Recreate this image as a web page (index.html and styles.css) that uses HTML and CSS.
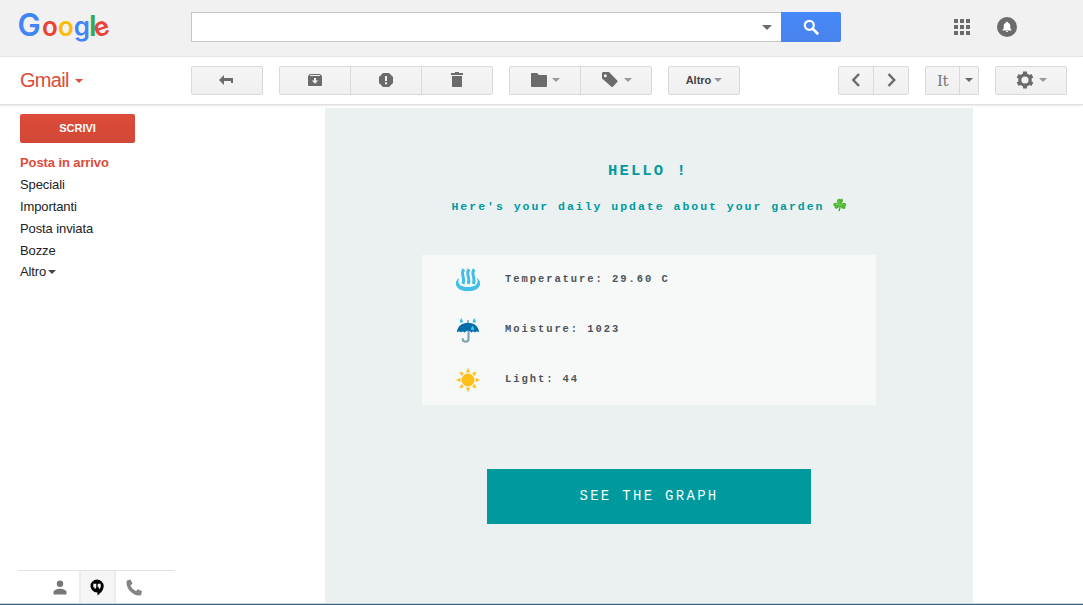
FILE: index.html
```html
<!DOCTYPE html>
<html lang="it">
<head>
<meta charset="utf-8">
<title>Gmail</title>
<link rel="stylesheet" href="styles.css">
</head>
<body>
<div class="app">
  <header class="header">
    <svg class="logo" width="94" height="36" viewBox="0 0 94 36" aria-label="Google">
      <text y="27.600"><tspan class="logo-cap blue" x="-1.600">G</tspan><tspan class="red" x="23">o</tspan><tspan class="yellow" x="39">o</tspan><tspan class="blue" x="54.800">g</tspan><tspan class="logo-l green" x="70">l</tspan></text>
      <text class="red" transform="translate(77.600 29.800) rotate(-18)">e</text>
    </svg>
    <div class="search">
      <div class="search-field"><i class="caret caret-lg"></i></div>
      <div class="search-button">
        <svg width="18" height="18" viewBox="0 0 18 18"><circle cx="7.300" cy="7.300" r="4.500" fill="none" stroke="#fff" stroke-width="2.200"/><path d="M10.500 10.500l5.700 5.700" stroke="#fff" stroke-width="2.700"/></svg>
      </div>
    </div>
    <svg class="apps" width="16" height="16" viewBox="0 0 16 16" fill="#6b6b6b"><path d="M0 0h4v4H0zM6 0h4v4H6zM12 0h4v4h-4zM0 6h4v4H0zM6 6h4v4H6zM12 6h4v4h-4zM0 12h4v4H0zM6 12h4v4H6zM12 12h4v4h-4z"/></svg>
    <svg class="bell" width="20" height="20" viewBox="0 0 20 20"><circle cx="10" cy="10" r="10" fill="#6b6b6b"/><path d="M10 4.800c.7 0 1.100.4 1.100 1 1.500.4 2.200 1.600 2.200 3v2.700l1.200 1.200v.7h-9v-.7l1.200-1.200V8.800c0-1.400.7-2.600 2.200-3 0-.6.4-1 1.100-1zM8.900 14h2.200a1.100 1.100 0 0 1-2.200 0z" fill="#fff"/></svg>
  </header>

  <div class="toolbar">
    <div class="brand">Gmail<i class="caret caret-red"></i></div>
    <div class="group"><div class="btn w72">
      <svg class="nudge-left" width="16" height="14" viewBox="0 0 16 14"><path d="M1 7L6 2v3h9v5h-2V8H6v4z" fill="#6b6b6b"/></svg>
    </div></div>
    <div class="group">
      <div class="btn w72"><svg width="16" height="16" viewBox="0 0 16 16"><path fill="#6b6b6b" fill-rule="evenodd" d="M3 2h10l2 2v9a1 1 0 0 1-1 1H2a1 1 0 0 1-1-1V4zM3 3.100v.8h10v-.8zM7 6v2.500H4.800L8 11.800l3.200-3.300H9V6z"/></svg></div>
      <div class="btn w71"><svg width="16" height="16" viewBox="0 0 16 16"><path fill="#6b6b6b" d="M5 1h6l4 4v6l-4 4H5l-4-4V5z"/><path fill="#f3f3f3" d="M7 4h2v5H7zM7 10.300h2v2H7z"/></svg></div>
      <div class="btn w71"><svg width="16" height="16" viewBox="0 0 16 16"><path fill="#6b6b6b" d="M6 0h4v1h4v2H2V1h4zM3 4h10v10.500L12.500 15h-9L3 14.500z"/></svg></div>
    </div>
    <div class="group">
      <div class="btn w72"><svg width="18" height="16" viewBox="0 0 18 16"><path fill="#6b6b6b" d="M1 1.500L1.500 1H7L9 3h7.500l.5.500V14.500l-.5.500h-15l-.5-.5z"/></svg><i class="caret caret-gray"></i></div>
      <div class="btn w71"><svg width="18" height="16" viewBox="0 0 18 16"><path fill="#6b6b6b" fill-rule="evenodd" d="M1 1L2 0h6l8.500 8.700v1l-4.800 5.300h-1L1 6.500zM4.300 2.300a1.500 1.500 0 1 0 0 3 1.500 1.500 0 0 0 0-3z"/></svg><i class="caret caret-gray caret-tag"></i></div>
    </div>
    <div class="group"><div class="btn w72 altro">Altro<i class="caret caret-gray"></i></div></div>
    <div class="toolbar-end">
      <div class="group">
        <div class="btn w36"><svg width="14" height="16" viewBox="0 0 14 16"><path d="M10 2L4.300 8 10 14" fill="none" stroke="#6b6b6b" stroke-width="2.500"/></svg></div>
        <div class="btn w35"><svg width="14" height="16" viewBox="0 0 14 16"><path d="M4.500 2l5.700 6-5.700 6" fill="none" stroke="#6b6b6b" stroke-width="2.500"/></svg></div>
      </div>
      <div class="group">
        <div class="btn w35 input-tool">It</div>
        <div class="btn w19"><i class="caret caret-dark"></i></div>
      </div>
      <div class="group"><div class="btn w72">
        <svg width="18" height="18" viewBox="0 0 18 18"><circle cx="9" cy="9" r="5.200" fill="none" stroke="#6b6b6b" stroke-width="3.200"/><g fill="#6b6b6b"><path id="t" d="M7 .5h4v3.500H7z"/><use href="#t" transform="rotate(60 9 9)"/><use href="#t" transform="rotate(120 9 9)"/><use href="#t" transform="rotate(180 9 9)"/><use href="#t" transform="rotate(240 9 9)"/><use href="#t" transform="rotate(300 9 9)"/></g></svg><i class="caret caret-gray caret-gear"></i>
      </div></div>
    </div>
  </div>

  <div class="main">
    <aside class="sidebar">
      <div class="compose">SCRIVI</div>
      <nav class="nav">
        <div class="nav-item active">Posta in arrivo</div>
        <div class="nav-item">Speciali</div>
        <div class="nav-item">Importanti</div>
        <div class="nav-item">Posta inviata</div>
        <div class="nav-item">Bozze</div>
        <div class="nav-item more">Altro<i class="caret caret-more"></i></div>
      </nav>
      <div class="chat-tabs">
        <div class="tab"><svg width="14" height="15" viewBox="0 0 14 15" fill="#777"><circle cx="7" cy="3.700" r="3.200"/><path d="M.5 14.500v-2.500c0-2 3.500-3.300 6.500-3.300s6.500 1.300 6.500 3.300v2.500z"/></svg></div>
        <div class="tab selected"><svg width="14" height="17" viewBox="0 0 14 17"><path d="M7 .5a6.700 6.700 0 0 1 6.700 6.500c0 4.400-3.700 7.700-6.200 9.500v-3H7A6.500 6.500 0 0 1 7 .5z"/><path fill="#f5f5f5" d="M3.300 4.700h3v3c0 1.300-.7 2-1.800 2.300V8.200H3.300zM7.700 4.700h3v3c0 1.300-.7 2-1.800 2.300V8.200H7.700z"/></svg></div>
        <div class="tab"><svg width="17" height="17" viewBox="0 0 17 17"><path fill="#858585" d="M1 1.500L4.500.5l2 4-2 2c1 2.300 3 4.500 5.500 5.600l2-1.900 4 2-.8 3.600c-.3.600-1 .7-1.700.7C6.500 16.500.5 10 .5 3.500c0-.8 0-1.500.5-2z"/></svg></div>
      </div>
    </aside>

    <section class="mail">
      <h1 class="title">HELLO !</h1>
      <div class="subtitle">Here's your daily update about your garden
        <svg class="clover" width="14" height="14" viewBox="0 0 14 14"><path d="M7 7q.4 3-1 6" fill="none" stroke="#3a9a24" stroke-width="1.300"/><g fill="#4db52f"><path d="M7 7.200C3 5 4 2.500 4.700 1.300 6 .2 6.700.7 7.200 1.500 8 .2 9.500.7 10 1.800c.4 2-1.500 3.800-3 5.400z"/><path d="M7 7.200C5.300 10.700 3 11.300 2 10.300c-.7-.8-.4-1.500 0-1.900C.2 8.200 0 6.300.7 5.300 2.200 3.700 5 5.300 7 7.200z"/><path d="M7 7.200c2-2.200 4.700-3 5.800-1.700.9 1.300.2 2.600-.7 2.900.8.900.3 2.100-.7 2.500C9.700 11.500 8 9.600 7 7.200z"/></g><path d="M5.500 2.500L7 7 2 6.500M7 7l4.800-.3" stroke="#72cf50" fill="none" stroke-width=".8"/></svg>
      </div>
      <div class="card">
        <div class="row">
          <svg width="26" height="26" viewBox="0 0 26 26" fill="none" stroke="#41bfe8"><path d="M4.200 11C-1.800 14.500-.2 24 13 24s14.800-9.500 8.800-13c2.400 4.900-.4 9-8.800 9s-11.200-4.100-8.800-9z" fill="#41bfe8" stroke="none"/><path d="M8.800 2.200c-4 5 2 8-.8 14.800M14 2.200c-4 5 2 8-.8 14.800M19.200 2.200c-4 5 2 8-.8 14.800" stroke-width="3"/></svg>
          <span>Temperature: 29.60 C</span>
        </div>
        <div class="row">
          <svg width="26" height="26" viewBox="0 0 26 26"><path d="M13 3v3" stroke="#7da5b1" stroke-width="1.600"/><path d="M13.500 13v9c0 3.600-5.700 3.600-5.700 0v-.8" fill="none" stroke="#7da5b1" stroke-width="2.200"/><path d="M2 15.500C2 9.500 7 5.800 13 5.800s11 3.700 11 9.700c-1.400-1.500-3-1.500-4 0-1.200-1.500-2.500-1.500-3.600.3-1.200-1.800-2.100-2.100-3.400-2.100s-2.200.3-3.400 2.100c-1.100-1.800-2.400-1.800-3.600-.3-1-1.500-2.600-1.500-4 0z" fill="#026ea8"/><g fill="#41bfe8"><path id="d" d="M6.300 1Q9.500 5.800 6.300 5.800T6.300 1z"/><use href="#d" x="13"/><use href="#d" x="11.200" y="7.500"/></g></svg>
          <span>Moisture: 1023</span>
        </div>
        <div class="row">
          <svg width="26" height="26" viewBox="0 0 26 26" fill="#fdc01b"><circle cx="13" cy="13" r="6.500"/><path id="r" d="M13 .8l2 4.700h-4z"/><use href="#r" transform="rotate(45 13 13)"/><use href="#r" transform="rotate(90 13 13)"/><use href="#r" transform="rotate(135 13 13)"/><use href="#r" transform="rotate(180 13 13)"/><use href="#r" transform="rotate(225 13 13)"/><use href="#r" transform="rotate(270 13 13)"/><use href="#r" transform="rotate(315 13 13)"/></svg>
          <span>Light: 44</span>
        </div>
      </div>
      <div class="graph-button">SEE THE GRAPH</div>
    </section>
  </div>
</div>
</body>
</html>
```
FILE: styles.css
```css
* { box-sizing: border-box; }
body { margin: 0; background: #fff; font-family: "Liberation Sans", Arial, sans-serif; color: #222; }
svg { display: block; flex: none; }
.app { width: 1083px; height: 605px; overflow: hidden; display: flex; flex-direction: column; border-bottom: 1px solid #2f6690; }

.header { height: 57px; flex: none; display: flex; align-items: flex-start; padding-left: 19px; background: #f1f1f1; border-bottom: 1px solid #e3e3e3; }
.logo { margin-top: 8px; overflow: visible; font: 600 26px Inter, sans-serif; }
.logo-cap { font-size: 31px; }
.logo-l { font-size: 29px; }
.blue { fill: #4285f4; }
.red { fill: #ea4335; }
.yellow { fill: #fbbc05; }
.green { fill: #34a853; }
.search { display: flex; margin: 12px 0 0 78px; height: 30px; }
.search-field { width: 590px; background: #fff; border: 1px solid #c6c6c6; border-right: 0; display: flex; align-items: center; justify-content: flex-end; padding-right: 9px; }
.search-button { width: 60px; background: linear-gradient(#4688fa, #4983ec); border-radius: 0 2px 2px 0; display: flex; align-items: center; justify-content: center; }
.apps { margin: 19px 0 0 113px; }
.bell { margin: 17px 0 0 27px; }

.caret { display: inline-block; border: 4px solid transparent; border-bottom: 0; border-top-color: #777; flex: none; }
.caret-lg { border-width: 5px 5px 0; border-top-color: #6b6b6b; }
.caret-red { border-top-color: #dd4b39; margin: 1px 0 0 6px; }
.caret-gray { border-top-color: #999; margin-left: 4px; }
.caret-tag, .caret-gear { margin-left: 5px; }
.caret-dark { border-top-color: #666; }
.caret-more { border-top-color: #444; margin-left: 2px; }

.toolbar { height: 48px; flex: none; display: flex; align-items: flex-start; padding-top: 9px; border-bottom: 1px solid #e0e0e0; box-shadow: 0 1px 2px #e8e8e8; }
.brand { width: 191px; height: 29px; padding-left: 20px; display: flex; align-items: center; font-size: 20px; letter-spacing: -.7px; color: #dd4b39; }
.group { display: flex; height: 29px; margin-right: 16px; border: 1px solid #d9d9d9; border-radius: 2px; background: linear-gradient(#f5f5f5, #f0f0f0); }
.btn { display: flex; align-items: center; justify-content: center; padding-bottom: 1px; }
.btn + .btn { border-left: 1px solid #d9d9d9; }
.nudge-left { margin-right: 2px; }
.w72 { width: 70px; }
.w71 { width: 71px; }
.w36 { width: 34px; }
.w35 { width: 35px; }
.w35.input-tool { width: 33px; }
.w19 { width: 19px; }
.altro { font-size: 11px; font-weight: bold; color: #444; }
.altro .caret { margin-left: 3px; }
.input-tool { font-family: "DejaVu Serif", serif; font-size: 15px; letter-spacing: -.5px; color: #777; padding-top: 2px; }
.toolbar-end { margin-left: auto; display: flex; }

.main { flex: 1; display: flex; border-bottom: 1px solid #cdd3d6; }
.sidebar { width: 325px; padding: 9px 0 0 18px; display: flex; flex-direction: column; }
.compose { width: 115px; height: 29px; margin-left: 2px; border-radius: 2px; background: linear-gradient(#dd4b39, #d14836); color: #fff; font-size: 11px; line-height: 28px; font-weight: bold; text-align: center; letter-spacing: -.05px; }
.nav { padding: 9px 0 0 2px; font-size: 13px; }
.nav-item { height: 22px; line-height: 22px; letter-spacing: -.1px; }
.nav-item.active { font-weight: bold; color: #dd4b39; }
.nav-item.more { height: 19px; line-height: 19px; display: flex; align-items: center; }
.chat-tabs { margin-top: auto; width: 157px; height: 33px; border-top: 1px solid #e2e2e2; display: flex; padding-left: 24px; }
.tab { width: 37px; display: flex; align-items: center; justify-content: center; padding: 1px 1px 0 0; }
.tab.selected { background: #f5f5f5; border: 1px solid #ececec; border-width: 0 2px; padding-right: 2px; }

.mail { width: 648px; margin-top: 3px; background: #ebf1f1; display: flex; flex-direction: column; align-items: center; font-family: "Courier New", "Liberation Mono", monospace; font-weight: bold; }
.title { margin: 54px 2px 0 0; height: 18px; line-height: 18px; font-size: 15.500px; letter-spacing: 2.100px; color: #009a9f; }
.subtitle { margin-top: 18px; height: 16px; display: flex; align-items: center; gap: 8px; font-size: 11.500px; letter-spacing: 1.980px; color: #009a9f; white-space: nowrap; }
.clover { margin-bottom: 2px; }
.card { width: 454px; height: 150px; margin-top: 41px; background: #f7f9f9; }
.row { height: 50px; display: flex; align-items: center; gap: 24px; padding-left: 33px; font-size: 10.500px; letter-spacing: 1.930px; color: #4b5559; }
.row span { margin-bottom: 2px; }
.graph-button { width: 324px; height: 55px; margin-top: 64px; background: #00999e; color: #f0fafa; font-size: 14px; font-weight: normal; letter-spacing: 2.300px; line-height: 54px; text-align: center; }
```
